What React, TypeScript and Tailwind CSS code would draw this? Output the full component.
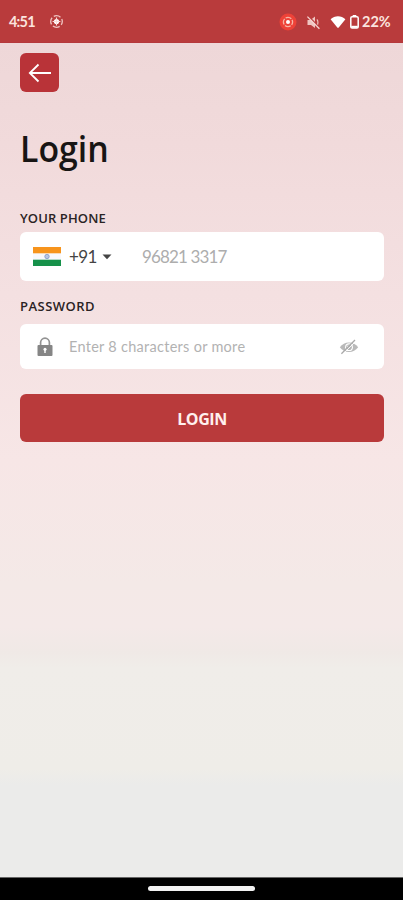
import { useState } from "react";

const StatusBar = () => {
  return (
    <header className="flex h-[43px] shrink-0 items-center border-b border-[#b5383c] bg-[#b93b3c] pl-[9px] pr-[12px] text-[#fbe3df]">
      <span className="mt-[3px] w-[41px] font-['Lato'] text-[14.5px] font-bold leading-none tracking-[-0.8px]">
        4:51
      </span>
      <svg
        className="mt-[1px]"
        width="15"
        height="15"
        viewBox="0 0 15 15"
        fill="none"
      >
        <circle
          cx="6.5"
          cy="7.5"
          r="5.8"
          stroke="#efc5c2"
          strokeWidth="1.3"
          strokeDasharray="7.11 2"
          strokeDashoffset="3.55"
        />
        <circle cx="6.5" cy="7.5" r="2.6" fill="#fff" />
        <path d="M6.5 3.6v7.8M2.6 7.5h7.8" stroke="#f8dedb" strokeWidth="1.1" />
      </svg>
      <div className="ml-auto flex items-center pt-[2px]">
        <svg width="18" height="18" viewBox="0 0 18 18" fill="none">
          <circle cx="9" cy="9" r="8.5" fill="#ee4238" />
          <circle
            cx="9"
            cy="9"
            r="4.6"
            stroke="#f7b5a6"
            strokeWidth="1.3"
            strokeDasharray="6.03 1.2"
            strokeDashoffset="3.01"
          />
          <circle cx="9" cy="9" r="2" fill="#fff" />
        </svg>
        <svg
          className="ml-[9px]"
          width="15"
          height="15"
          viewBox="0 0 15 15"
          fill="none"
        >
          <path d="M1.5 5h3L9 1.5v11.5L5 10H1.5z" fill="#efc5c1" />
          <path
            d="M10.8 4.6c1.5 1 1.5 4.6 0 5.8"
            stroke="#efc5c1"
            strokeWidth="1.2"
          />
          <path d="M2.6 1.2l11.5 12" stroke="#b93b3c" strokeWidth="1.4" />
          <path d="M1.4 1.6l12 12.2" stroke="#f6d5d1" strokeWidth="1.3" />
        </svg>
        <svg
          className="ml-[9px]"
          width="16"
          height="14"
          viewBox="0 0 16 14"
          fill="#fff"
        >
          <path d="M.6 4.2C4.6.2 11.4.2 15.4 4.2L8.7 12.6a.9.9 0 0 1-1.4 0z" />
        </svg>
        <svg
          className="ml-[4px]"
          width="9"
          height="14"
          viewBox="0 0 9 14"
          fill="none"
        >
          <path d="M2.7 0h3.6v2H2.7z" fill="#fff" />
          <rect
            x=".8"
            y="1.8"
            width="7.4"
            height="11.2"
            rx="1.3"
            stroke="#fff"
            strokeWidth="1.5"
          />
          <path d="M1.2 10.8h6.6v2H1.2z" fill="#fff" />
        </svg>
        <span className="ml-[3px] w-[29px] whitespace-nowrap font-['Lato'] text-[14.5px] font-bold leading-none">
          22%
        </span>
      </div>
    </header>
  );
};

const Flag = () => {
  return (
    <svg width="28" height="19" viewBox="0 0 28 19">
      <rect width="28" height="19" fill="#f8f8fc" />
      <rect width="28" height="6.3" fill="#f7941c" />
      <rect y="12.7" width="28" height="6.3" fill="#16914a" />
      <circle
        cx="14"
        cy="9.5"
        r="2.2"
        fill="#b9c6e3"
        stroke="#8297c7"
        strokeWidth=".8"
      />
    </svg>
  );
};

const LockIcon = () => {
  return (
    <svg width="16" height="20" viewBox="0 0 16 20" fill="none">
      <path
        d="M3.6 9V5.6a4.4 4.4 0 0 1 8.8 0V9"
        stroke="#939393"
        strokeWidth="1.7"
      />
      <rect x=".5" y="8" width="15" height="11" rx="1" fill="#858585" />
      <circle cx="8" cy="12.3" r="1.5" fill="#fff" />
      <path d="M7.3 12.5h1.4V16H7.3z" fill="#fff" />
    </svg>
  );
};

const EyeOffIcon = () => {
  return (
    <svg width="20" height="16" viewBox="0 0 20 16" fill="none">
      <path
        d="M.8 8.2C3.2 5 6.2 3.4 10 3.4s6.8 1.6 9.2 4.8c-2.4 3.2-5.4 4.8-9.2 4.8S3.2 11.4.8 8.2z"
        fill="#b9b9b9"
      />
      <circle cx="10" cy="8.2" r="3.9" fill="#fff" />
      <circle cx="10" cy="8.2" r="2.8" fill="#b4b4b4" />
      <circle cx="9" cy="7.4" r="1" fill="#fff" />
      <path d="M3.6 15.2L17.4 1.6" stroke="#fff" strokeWidth="1" />
      <path d="M2.4 14.8L16 1" stroke="#a9a9a9" strokeWidth="1.3" />
    </svg>
  );
};

export default function App() {
  const [phone, setPhone] = useState("");
  const [password, setPassword] = useState("");
  const [isVisible, setIsVisible] = useState(false);

  return (
    <div className="flex h-[900px] w-[403px] flex-col overflow-hidden bg-black">
      <StatusBar />
      <main className="flex flex-1 flex-col bg-[linear-gradient(to_bottom,#eed7d8_0%,#f1dadb_12%,#f4e0e1_30%,#f7e6e6_50%,#f4e9e7_65%,#f4e9e8_70%,#f0e9e6_73%,#f0ede9_75%,#efede8_87%,#ebebea_89%,#ebebea_100%)] px-[20px]">
        <button className="mt-[10px] flex size-[39px] items-center justify-center rounded-[6px] bg-[#b93338]">
          <svg width="24" height="20" viewBox="0 0 24 20" fill="none">
            <path
              d="M23 10H1.8M10.5 1.5L1.8 10l8.7 8.5"
              stroke="#fff"
              strokeWidth="1.8"
            />
          </svg>
        </button>
        <h1 className="mt-[32px] h-[50px] origin-left scale-x-[0.94] font-['Open_Sans'] text-[36px] font-semibold leading-[50px] text-[#181514]">
          Login
        </h1>
        <form onSubmit={(e) => e.preventDefault()}>
          <label
            htmlFor="phone"
            className="mt-[34px] block h-[20px] font-['Open_Sans'] text-[13px] font-semibold leading-[21px] tracking-[0.12px] text-[#2a2324]"
          >
            YOUR PHONE
          </label>
          <div className="mt-[4px] flex h-[49px] w-[364px] items-center rounded-[6px] bg-white pl-[13px]">
            <Flag />
            <span className="ml-[8px] w-[28px] font-['Lato'] text-[17px] leading-none tracking-[-0.6px] text-[#444]">
              +91
            </span>
            <svg
              className="ml-[5px]"
              width="10"
              height="6"
              viewBox="0 0 10 6"
              fill="#444"
            >
              <path d="M.5.5h9L5 5.2z" />
            </svg>
            <input
              id="phone"
              className="ml-[30px] w-[200px] font-['Lato'] text-[17px] tracking-[-0.85px] outline-none placeholder:text-[#adadad]"
              placeholder="96821 3317"
              value={phone}
              onChange={(e) => setPhone(e.target.value)}
            />
          </div>
          <label
            htmlFor="password"
            className="mt-[15px] block h-[20px] font-['Open_Sans'] text-[13px] font-semibold leading-[20px] tracking-[0.48px] text-[#2a2324]"
          >
            PASSWORD
          </label>
          <div className="mt-[8px] flex h-[45px] w-[364px] items-center rounded-[6px] bg-white pl-[17px]">
            <LockIcon />
            <input
              id="password"
              type={isVisible ? "text" : "password"}
              className="ml-[16px] w-[250px] font-['Lato'] text-[14.5px] tracking-[0.28px] outline-none placeholder:text-[#b2b2b2]"
              placeholder="Enter 8 characters or more"
              value={password}
              onChange={(e) => setPassword(e.target.value)}
            />
            <button
              type="button"
              className="ml-[20px]"
              onClick={() => setIsVisible(!isVisible)}
            >
              <EyeOffIcon />
            </button>
          </div>
          <button className="mt-[25px] h-[48px] w-[364px] rounded-[6px] bg-[#b93a3b] pt-[2px] font-['Open_Sans'] text-[16px] font-bold tracking-[-0.4px] text-[#fff0ee]">
            LOGIN
          </button>
        </form>
      </main>
      <footer className="flex h-[23px] shrink-0 justify-center border-t border-[#666] bg-black pt-[8px]">
        <div className="h-[5px] w-[107px] rounded-full bg-[#f2f2f2]" />
      </footer>
    </div>
  );
}
